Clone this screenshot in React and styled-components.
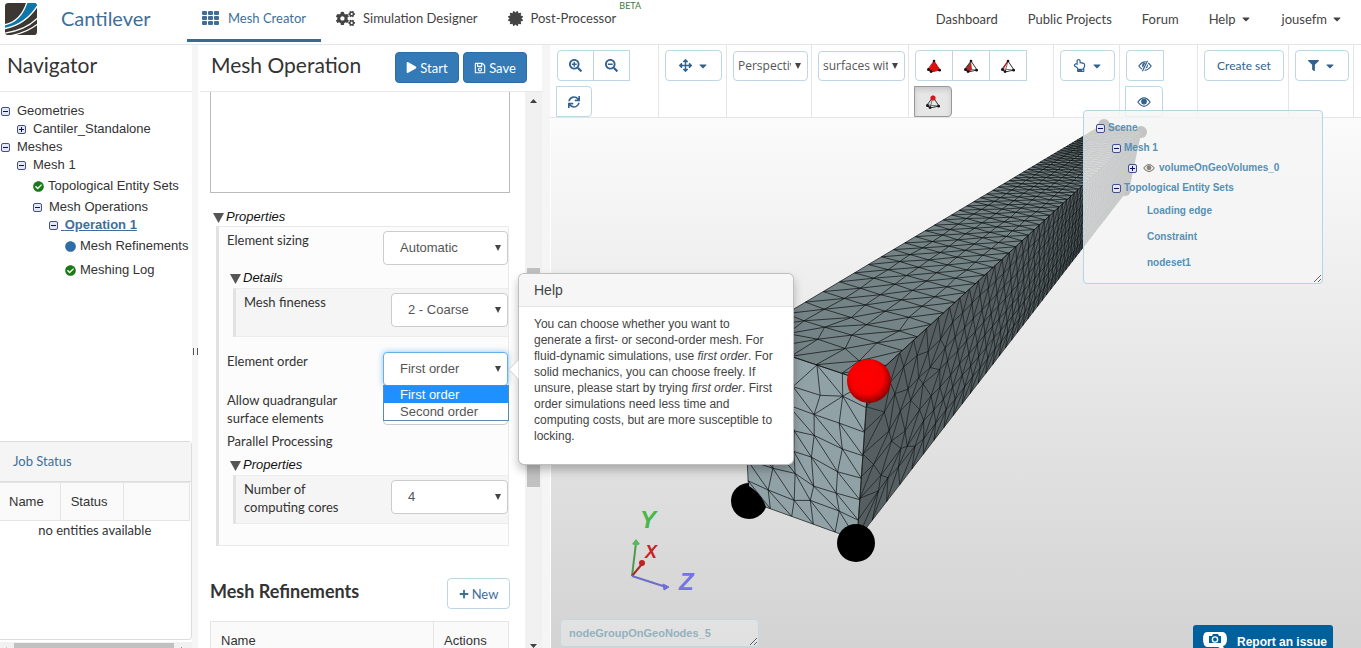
import {useMemo, useState} from 'react';
import styled, {createGlobalStyle, css} from 'styled-components';
import {
    FaArrowsAlt,
    FaCaretDown,
    FaCertificate,
    FaCheckCircle,
    FaCircle,
    FaCogs,
    FaFilter,
    FaPlay,
    FaPlus,
    FaRegHandPointUp,
    FaRegSave,
    FaSearchMinus,
    FaSearchPlus,
    FaSync,
} from 'react-icons/fa';

const SANS = '"Liberation Sans", Arial, sans-serif';
const LATO = 'Lato, "Liberation Sans", sans-serif';

const TREE = [
    {id: 'geo', label: 'Geometries', depth: 0, open: true},
    {id: 'cant', label: 'Cantiler_Standalone', depth: 1, open: false},
    {id: 'meshes', label: 'Meshes', depth: 0, open: true},
    {id: 'mesh1', label: 'Mesh 1', depth: 1, open: true},
    {id: 'topo', label: 'Topological Entity Sets', depth: 2, status: 'done'},
    {id: 'ops', label: 'Mesh Operations', depth: 2, open: true},
    {id: 'op1', label: 'Operation 1', depth: 3, open: true, active: true},
    {id: 'ref', label: 'Mesh Refinements', depth: 4, status: 'idle'},
    {id: 'log', label: 'Meshing Log', depth: 4, status: 'done'},
];

const SCENE = [
    {id: 'scene', label: 'Scene', depth: 0, open: true},
    {id: 'mesh', label: 'Mesh 1', depth: 1, open: true},
    {id: 'vol', label: 'volumeOnGeoVolumes_0', depth: 2, open: false, eye: true},
    {id: 'sets', label: 'Topological Entity Sets', depth: 1, open: true},
    {id: 'load', label: 'Loading edge', leaf: true},
    {id: 'cons', label: 'Constraint', leaf: true},
    {id: 'node', label: 'nodeset1', leaf: true},
];

// projective map of the unit square onto four screen points
const squareToQuad = ([p0, p1, p2, p3]) => {
    const dx1 = p1[0] - p2[0];
    const dx2 = p3[0] - p2[0];
    const dx3 = p0[0] - p1[0] + p2[0] - p3[0];
    const dy1 = p1[1] - p2[1];
    const dy2 = p3[1] - p2[1];
    const dy3 = p0[1] - p1[1] + p2[1] - p3[1];
    const det = dx1 * dy2 - dx2 * dy1;
    const g = (dx3 * dy2 - dx2 * dy3) / det;
    const h = (dx1 * dy3 - dx3 * dy1) / det;
    return (u, v) => {
        const w = g * u + h * v + 1;
        return [
            ((p1[0] - p0[0] + g * p1[0]) * u + (p3[0] - p0[0] + h * p3[0]) * v + p0[0]) / w,
            ((p1[1] - p0[1] + g * p1[1]) * u + (p3[1] - p0[1] + h * p3[1]) * v + p0[1]) / w,
        ];
    };
};

const noise = (i, j, k) => {
    const n = Math.sin(i * 12.9898 + j * 78.233 + k * 37.719) * 43758.5453;
    return n - Math.floor(n) - 0.5;
};

// triangulated grid on a face: u runs over cols, v over rows
// staggered faces shift every odd column by half a cell
const facePath = (quad, cols, rows, {jitter, flip = () => false, stagger = false}) => {
    const map = squareToQuad(quad);
    const node = (i, j) => {
        const a = jitter(i, j);
        const inside = j > 0 && j < rows;
        const du = i > 0 && i < cols && inside ? noise(i, j, 1) * a : 0;
        let dv = i > 0 && i < cols && inside ? noise(i, j, 2) * a : 0;
        if (stagger && i % 2 === 1 && i < cols && inside) dv += 0.5;
        return map((i + du) / cols, (j + dv) / rows).map((n) => n.toFixed(1)).join(' ');
    };
    let d = '';
    for (let i = 0; i <= cols; i++) {
        for (let j = 0; j <= rows; j++) {
            if (i < cols) d += `M${node(i, j)}L${node(i + 1, j)}`;
            if (j < rows) d += `M${node(i, j)}L${node(i, j + 1)}`;
            if (i < cols && j < rows) {
                const flipped = stagger ? i % 2 === 0 : flip(i, j);
                d += flipped
                    ? `M${node(i + 1, j)}L${node(i, j + 1)}`
                    : `M${node(i, j)}L${node(i + 1, j + 1)}`;
            }
        }
    }
    return d;
};

const NEAR = {tl: [191, 222], tr: [317, 264], bl: [198, 383], br: [306, 422]};
const FAR = {tl: [553, 6], tr: [590, 14], br: [578, 70]};
const FRONT = [NEAR.tl, NEAR.tr, NEAR.br, NEAR.bl];
const TOP = [NEAR.tl, NEAR.tr, FAR.tr, FAR.tl];
const SIDE = [NEAR.tr, NEAR.br, FAR.br, FAR.tr];
const points = (quad) => quad.map((p) => p.join(',')).join(' ');

const Beam = () => {
    const lines = useMemo(() => ({
        front: facePath(FRONT, 5, 7, {jitter: () => 0.35, flip: (i, j) => j < 2 && (i + j) % 2 === 0}),
        top: facePath(TOP, 5, 56, {jitter: (i, j) => (j < 4 ? 0.5 : 0.1)}),
        side: facePath(SIDE, 7, 56, {jitter: (i, j) => (j < 6 ? 0.6 : 0.1), stagger: true}),
    }), []);

    return (
        <Scene aria-label="Mesh">
            <defs>
                <radialGradient id="ball" cx="45%" cy="42%" r="58%">
                    <stop offset="0" stopColor="#ff0000"/>
                    <stop offset="0.65" stopColor="#f80000"/>
                    <stop offset="1" stopColor="#900000"/>
                </radialGradient>
            </defs>
            <circle cx="553" cy="7" r="6"/>
            <circle cx="590" cy="14" r="6"/>
            <circle cx="574" cy="72" r="6"/>
            <polygon points={points(TOP)} fill="#748385"/>
            <polygon points={points(SIDE)} fill="#555e61"/>
            <polygon points={points(FRONT)} fill="#91a2a6"/>
            <g fill="none" stroke="#0b0f10">
                <path d={lines.top} strokeWidth="0.7"/>
                <path d={lines.side} strokeWidth="0.6"/>
                <path d={lines.front} strokeWidth="0.7"/>
            </g>
            <path d="M198 365 A18 18 0 1 0 215 389 Q211 376 198 368 Z"/>
            <circle cx="305" cy="425" r="19"/>
            <circle cx="318" cy="263" r="22" fill="url(#ball)"/>

            <g fill="none" strokeWidth="2">
                <path d="M81 458 L85 425" stroke="#4c9a4c"/>
                <path d="M81 458 L91 446" stroke="#a82a2a"/>
                <path d="M81 458 L115 469" stroke="#6d6dc8"/>
            </g>
            <path d="M85 421 L89 426 L85 428 L81 426 Z" fill="#5bb75b"/>
            <circle cx="91" cy="445" r="3" fill="#c02020"/>
            <path d="M112 466 L118 469 L113 472 Z" fill="#6d6de0" stroke="#6d6dd8"/>
            <AxisLabel x="89" y="410" $size={24} fill="#45b845">Y</AxisLabel>
            <AxisLabel x="94" y="440" $size={18} fill="#c42424">X</AxisLabel>
            <AxisLabel x="128" y="472" $size={24} fill="#7474e6">Z</AxisLabel>
        </Scene>
    );
};

const Logo = () => (
    <svg width="32" height="32" viewBox="0 0 96 96" aria-label="Logo">
        <clipPath id="logo"><rect width="96" height="96" rx="10"/></clipPath>
        <g clipPath="url(#logo)">
            <rect width="96" height="96" fill="#3d3733"/>
            <path d="M-3 66 Q48 56 66 -3 H99 V6 Q62 66 -3 77 Z" fill="#0e76a8" stroke="#fff" strokeWidth="4"/>
            <path d="M-3 91 Q62 82 99 44 M14 99 Q68 88 99 62" fill="none" stroke="#fff" strokeWidth="4"/>
        </g>
    </svg>
);

const GridIcon = () => (
    <svg width="18" height="14" viewBox="0 0 18 14" fill="currentColor" aria-hidden="true">
        {[0, 5, 10].map((y) => [0, 6, 12].map((x) => (
            <rect key={`${x}-${y}`} x={x} y={y} width="5" height="4" rx="1"/>
        )))}
    </svg>
);

const EyeIcon = ({size = 14, slash}) => (
    <svg width={size} height={size} viewBox="0 0 16 16" fill="none" stroke="currentColor" strokeWidth="1.4" aria-hidden="true">
        <path d="M1 8 Q4.5 3.2 8 3.2 T15 8 Q11.5 12.8 8 12.8 T1 8 Z"/>
        <circle cx="8" cy="7.5" r="2.6" fill="currentColor"/>
        {slash && <path d="M11.5 1.5 L5 14.5" stroke="#fff" strokeWidth="3"/>}
        {slash && <path d="M10.8 2 L5 14"/>}
    </svg>
);

const TetraIcon = ({mode}) => (
    <svg width="14" height="14" viewBox="0 0 14 14" strokeLinejoin="round" aria-hidden="true">
        {mode === 'volume' && <path d="M7 2 L1 11 L4 13 L13 11 Z" fill="#e01010"/>}
        {mode === 'face' && <path d="M7 2 L4 13 L8 11 Z M7 2 L1 10 L4 13 Z" fill="#e01010"/>}
        <path d="M7 2 L1 10 L4 13 L13 11 Z" fill="none" stroke={mode === 'volume' ? '#c01010' : '#333'}/>
        {mode !== 'volume' && <path d="M7 2 L4 13 M1 10 L13 11" fill="none" stroke="#555" strokeWidth="0.8"/>}
        {mode === 'edge' && <path d="M7 2 L2 10" stroke="#e01010" strokeWidth="1.2"/>}
        <g fill="#111">
            <circle cx="7" cy="2" r="1.3"/>
            <circle cx="1.5" cy="10.5" r="1.5"/>
            <circle cx="4" cy="12.6" r="1.4"/>
            <circle cx="12.6" cy="11.2" r="1.4"/>
        </g>
        {mode === 'node' && <circle cx="7" cy="3" r="2.6" fill="#d81818"/>}
    </svg>
);

const Toggle = ({open, onClick}) => (
    <ToggleButton type="button" onClick={onClick} aria-label={open ? 'Collapse' : 'Expand'}>
        <svg width="9" height="9" viewBox="0 0 9 9" aria-hidden="true">
            <rect x="0.5" y="0.5" width="8" height="8" rx="1.5" fill="#e4e6f8" stroke="#44508c"/>
            <path d={open ? 'M2 4.5 H7' : 'M2 4.5 H7 M4.5 2 V7'} stroke="#101060"/>
        </svg>
    </ToggleButton>
);

const Navigator = () => (
    <NavPanel>
        <PanelTitle>Navigator</PanelTitle>
        <Tree>
            {TREE.map((item) => (
                <TreeRow key={item.id} $depth={item.depth} $tall={Boolean(item.status)}>
                    {item.status ? (
                        <Status $kind={item.status}>
                            {item.status === 'done' ? <FaCheckCircle/> : <FaCircle/>}
                        </Status>
                    ) : <Toggle open={item.open}/>}
                    {item.active
                        ? <ActiveLink href="#operation">&nbsp;{item.label}</ActiveLink>
                        : <span>{item.label}</span>}
                </TreeRow>
            ))}
        </Tree>
        <JobPanel>
            <JobTitle>Job Status</JobTitle>
            <JobTable>
                <thead>
                    <tr><th>Name</th><th>Status</th><th aria-label="Actions"/></tr>
                </thead>
                <tbody>
                    <tr><td colSpan="3">no entities available</td></tr>
                </tbody>
            </JobTable>
        </JobPanel>
        <HScroll aria-hidden="true">
            <Arrow $dir="left" $muted/>
            <HThumb/>
            <Arrow $dir="right"/>
        </HScroll>
    </NavPanel>
);

const Field = ({id, label, value, options, narrow, tight, focused, children}) => (
    <FieldRow $tight={tight}>
        <FieldLabel htmlFor={id} $narrow={narrow}>{label}</FieldLabel>
        <FieldControl $narrow={narrow}>
            <Select id={id} defaultValue={value} $focused={focused}>
                {options.map((o) => <option key={o}>{o}</option>)}
            </Select>
            {children}
        </FieldControl>
    </FieldRow>
);

const MeshOperation = () => {
    const [order, setOrder] = useState('First order');

    return (
        <OperationPanel>
            <PanelHead>
                <h1>Mesh Operation</h1>
                <PrimaryButton type="button"><FaPlay size={11}/>Start</PrimaryButton>
                <PrimaryButton type="button"><FaRegSave size={12}/>Save</PrimaryButton>
            </PanelHead>
            <OperationBody>
                <Form onSubmit={(e) => e.preventDefault()}>
                    <LogBox aria-label="Log" readOnly/>
                    <Legend>Properties</Legend>
                    <Group>
                        <Field id="sizing" label="Element sizing" value="Automatic" tight
                               options={['Automatic', 'Manual']}/>
                        <Legend $nested>Details</Legend>
                        <SubGroup>
                            <Field id="fineness" label="Mesh fineness" value="2 - Coarse" narrow
                                   options={['1 - Very coarse', '2 - Coarse', '3 - Moderate']}/>
                        </SubGroup>
                        <Spacer/>
                        <Field id="order" label="Element order" value={order} focused
                               options={['First order', 'Second order']}>
                            <OptionList role="listbox">
                                {['First order', 'Second order'].map((o) => (
                                    <Option key={o} role="option" aria-selected={o === order}
                                            $selected={o === order} onClick={() => setOrder(o)}>{o}</Option>
                                ))}
                            </OptionList>
                            <Popover role="tooltip">
                                <h3>Help</h3>
                                <p>
                                    You can choose whether you want to generate a first- or second-order mesh. For
                                    fluid-dynamic simulations, use <em>first order</em>. For solid mechanics, you can
                                    choose freely. If unsure, please start by trying <em>first order</em>. First order
                                    simulations need less time and computing costs, but are more susceptible to locking.
                                </p>
                            </Popover>
                        </Field>
                        <Field id="quad" label="Allow quadrangular surface elements" value="" options={['']}/>
                        <FieldText>Parallel Processing</FieldText>
                        <Legend $nested>Properties</Legend>
                        <SubGroup>
                            <Field id="cores" label="Number of computing cores" value="4" narrow options={['4', '8', '16']}/>
                        </SubGroup>
                    </Group>
                    <SectionHead>
                        <h2>Mesh Refinements</h2>
                        <OutlineButton type="button"><FaPlus size={10}/>New</OutlineButton>
                    </SectionHead>
                    <RefinementTable>
                        <thead><tr><th>Name</th><th>Actions</th></tr></thead>
                    </RefinementTable>
                </Form>
                <VScroll aria-hidden="true">
                    <Arrow $dir="up"/>
                    <VThumb/>
                    <Arrow $dir="down"/>
                </VScroll>
            </OperationBody>
        </OperationPanel>
    );
};

const Viewer = () => (
    <ViewerPanel>
        <Toolbar>
            <Tools $width={108}>
                <ToolButton type="button" aria-label="Zoom in" $edge="left"><FaSearchPlus size={13}/></ToolButton>
                <ToolButton type="button" aria-label="Zoom out"><FaSearchMinus size={13}/></ToolButton>
                <ToolButton type="button" aria-label="Refresh" $edge="right"><FaSync size={12}/></ToolButton>
            </Tools>
            <Tools $width={68}>
                <ToolButton type="button" aria-label="Move" $wide><FaArrowsAlt size={13}/><FaCaretDown size={12}/></ToolButton>
            </Tools>
            <Tools $width={85}>
                <ToolSelect aria-label="Projection" $width={75}><option>Perspective</option></ToolSelect>
            </Tools>
            <Tools $width={97}>
                <ToolSelect aria-label="Render mode" $width={87}><option>surfaces with edges</option></ToolSelect>
            </Tools>
            <Tools $width={145}>
                <ToolButton type="button" aria-label="Pick volume" $edge="left"><TetraIcon mode="volume"/></ToolButton>
                <ToolButton type="button" aria-label="Pick face"><TetraIcon mode="face"/></ToolButton>
                <ToolButton type="button" aria-label="Pick edge"><TetraIcon mode="edge"/></ToolButton>
                <ToolButton type="button" aria-label="Pick node" $edge="right" $pressed><TetraIcon mode="node"/></ToolButton>
            </Tools>
            <Tools $width={66}>
                <ToolButton type="button" aria-label="Select" $wide><FaRegHandPointUp size={13}/><FaCaretDown size={12}/></ToolButton>
            </Tools>
            <Tools $width={78}>
                <ToolButton type="button" aria-label="Hide" $edge="left"><EyeIcon slash/></ToolButton>
                <ToolButton type="button" aria-label="Show" $edge="right"><EyeIcon/></ToolButton>
            </Tools>
            <Tools $width={91}>
                <ToolButton type="button" $wide>Create set</ToolButton>
            </Tools>
            <Tools $width={65}>
                <ToolButton type="button" aria-label="Filter" $wide><FaFilter size={11}/><FaCaretDown size={12}/></ToolButton>
            </Tools>
        </Toolbar>
        <Canvas>
            <Beam/>
            <ScenePanel>
                {SCENE.map((item) => (
                    <SceneRow key={item.id} $depth={item.depth} $leaf={item.leaf}>
                        {!item.leaf && <Toggle open={item.open}/>}
                        {item.eye && <SceneEye><EyeIcon size={12}/></SceneEye>}
                        <span>{item.label}</span>
                    </SceneRow>
                ))}
            </ScenePanel>
            <Selection aria-label="Selection" defaultValue="nodeGroupOnGeoNodes_5"/>
            <Report type="button">
                <svg width="24" height="20" viewBox="0 0 24 20" aria-hidden="true">
                    <path d="M4 0 H20 Q24 1 24 7 T20 14 L22 19 L15 15 H4 Q0 14 0 7 T4 0 Z" fill="#fff"/>
                    <path d="M6 4 H9 L10 2 H15 L16 4 H18 V11 H6 Z" fill="#00609c"/>
                    <circle cx="12" cy="7.5" r="2.6" fill="#00609c" stroke="#fff" strokeWidth="1.4"/>
                </svg>
                Report an issue
            </Report>
        </Canvas>
    </ViewerPanel>
);

export default function App() {
    return (
        <>
            <GlobalStyle/>
            <Page>
                <Header>
                    <Logo/>
                    <Project href="#project">Cantilever</Project>
                    <Tabs>
                        <Tab href="#mesh" $active><GridIcon/>Mesh Creator</Tab>
                        <Tab href="#simulation"><FaCogs size={19}/>Simulation Designer</Tab>
                        <Tab href="#post"><FaCertificate size={15}/>Post-Processor<sup>BETA</sup></Tab>
                    </Tabs>
                    <Menu>
                        <a href="#dashboard">Dashboard</a>
                        <a href="#public">Public Projects</a>
                        <a href="#forum">Forum</a>
                        <a href="#help">Help<FaCaretDown size={12}/></a>
                        <a href="#user">jousefm<FaCaretDown size={12}/></a>
                    </Menu>
                </Header>
                <Columns>
                    <Navigator/>
                    <Splitter/>
                    <MeshOperation/>
                    <Viewer/>
                </Columns>
            </Page>
        </>
    );
}

const GlobalStyle = createGlobalStyle`
  * {
    box-sizing: border-box;
  }

  body {
    margin: 0;
    background: #fff;
    color: #333;
    font: 13px/18px ${LATO};
  }

  button, select, textarea {
    font: inherit;
    color: inherit;
  }

  h1, h2, h3, p, ul {
    margin: 0;
    padding: 0;
  }

  a {
    text-decoration: none;
  }
`;

const Page = styled.div`
  display: grid;
  grid-template-rows: 45px minmax(0, 1fr);
  height: 100vh;
  overflow: hidden;
`;

const Header = styled.header`
  display: flex;
  align-items: flex-start;
  padding: 3px 3px 0 5px;
  border-bottom: 1px solid #e5e5e5;
`;

const Project = styled.a`
  width: 126px;
  margin-left: 24px;
  color: #3f6f99;
  font-size: 20px;
  line-height: 31px;
`;

const Tabs = styled.nav`
  display: flex;
  margin-top: -3px;
`;

const Tab = styled.a`
  display: flex;
  align-items: center;
  gap: 8px;
  height: 42px;
  padding: 0 15px 3px;
  border-bottom: 3px solid ${({$active}) => ($active ? '#386b94' : 'transparent')};
  color: ${({$active}) => ($active ? '#3f6f99' : '#444')};

  sup {
    align-self: flex-start;
    margin-left: -5px;
    color: #3c763d;
    font-size: 9px;
    line-height: 11px;
  }
`;

const Menu = styled.nav`
  display: flex;
  margin-left: auto;

  a {
    display: flex;
    align-items: center;
    gap: 4px;
    padding: 0 15px;
    color: #444;
    line-height: 32px;
  }
`;

const Columns = styled.div`
  display: grid;
  grid-template-columns: 192px 6px 344px minmax(0, 1fr);
  min-height: 0;
`;

const NavPanel = styled.aside`
  display: flex;
  flex-direction: column;
  min-width: 0;
  overflow: hidden;
`;

const PanelTitle = styled.h1`
  padding: 0 7px 6px;
  border-bottom: 1px solid #e8e8e8;
  font-size: 21px;
  font-weight: 400;
  line-height: 40px;
`;

const Tree = styled.ul`
  flex: 1;
  padding-top: 10px;
  list-style: none;
  font-family: ${SANS};
  font-size: 13px;
`;

const TreeRow = styled.li`
  display: flex;
  align-items: center;
  gap: ${({$tall}) => ($tall ? 4 : 7)}px;
  height: ${({$tall}) => ($tall ? 24 : 18)}px;
  padding-left: ${({$depth}) => $depth * 16 + 1}px;
  white-space: nowrap;
`;

const ToggleButton = styled.button`
  display: flex;
  padding: 0;
  border: none;
  background: transparent;
`;

const Status = styled.span`
  display: flex;
  color: ${({$kind}) => ($kind === 'done' ? '#1a7a1a' : '#2f6da8')};
  font-size: 11px;
`;

const ActiveLink = styled.a`
  margin-left: -4px;
  color: #3f6f99;
  font-weight: 700;
  text-decoration: underline;
`;

const JobPanel = styled.section`
  height: 199px;
  border: 1px solid #ddd;
  border-left: none;
  border-radius: 0 4px 4px 0;
`;

const JobTitle = styled.h2`
  padding: 0 13px;
  border-bottom: 1px solid #ddd;
  background: #f5f5f5;
  color: #3f6f99;
  font-size: 13px;
  font-weight: 400;
  line-height: 39px;
`;

const tableHead = css`
  border: 1px solid #e5e5e5;
  background: #fafafa;
  font-family: ${SANS};
  font-weight: 400;
  text-align: left;
`;

const JobTable = styled.table`
  width: calc(100% - 1px);
  border-collapse: collapse;

  th {
    ${tableHead};
    height: 38px;
    padding: 0 9px;
    width: 66px;
  }

  th:first-child {
    width: 60px;
    border-left: none;
  }

  th:nth-child(2) {
    width: 63px;
    padding-left: 10px;
  }

  td {
    padding: 0;
    text-align: center;
  }
`;

const HScroll = styled.div`
  display: flex;
  align-items: center;
  gap: 7px;
  height: 17px;
  margin: 2px 0 -11px;
  padding: 0 3px;
  background: #f1f1f1;
`;

const HThumb = styled.div`
  width: 160px;
  height: 15px;
  background: #c1c1c1;
`;

const arrows = {
    up: '50% 0, 100% 100%, 0 100%',
    down: '0 0, 100% 0, 50% 100%',
    left: '0 50%, 100% 0, 100% 100%',
    right: '0 0, 100% 50%, 0 100%',
};

const Arrow = styled.i`
  flex: none;
  width: ${({$dir}) => ($dir === 'up' || $dir === 'down' ? 7 : 4)}px;
  height: ${({$dir}) => ($dir === 'up' || $dir === 'down' ? 4 : 7)}px;
  background: ${({$muted}) => ($muted ? '#a3a3a3' : '#404040')};
  clip-path: polygon(${({$dir}) => arrows[$dir]});
`;

const Splitter = styled.div`
  display: flex;
  align-items: center;
  justify-content: center;
  padding-top: 10px;
  background: #f5f5f5;

  &::before {
    content: '';
    width: 3px;
    height: 7px;
    border: solid #555;
    border-width: 0 1px;
  }
`;

const OperationPanel = styled.main`
  position: relative;
  z-index: 2;
  display: grid;
  grid-template-rows: 47px minmax(0, 1fr);
  min-height: 0;
`;

const PanelHead = styled.header`
  display: flex;
  gap: 4px;
  margin-left: 2px;
  padding: 7px 15px 0 11px;
  border-bottom: 1px solid #e8e8e8;

  h1 {
    flex: 1;
    font-size: 21px;
    font-weight: 400;
    line-height: 26px;
  }
`;

const buttonBase = css`
  display: flex;
  align-items: center;
  justify-content: center;
  gap: 3px;
  height: 31px;
  border: 1px solid;
  border-radius: 4px;
`;

const PrimaryButton = styled.button`
  ${buttonBase};
  width: 64px;
  padding: 0;
  border-color: #2e6da4;
  background: #337ab7;
  color: #fff;
`;

const OutlineButton = styled.button`
  ${buttonBase};
  width: 63px;
  padding: 0;
  border-color: #bcd8e4;
  background: #fff;
  color: #3f6f99;
`;

const OperationBody = styled.div`
  display: flex;
  min-height: 0;
`;

const Form = styled.form`
  flex: 1;
  padding: 0 15px 0 12px;
`;

const LogBox = styled.textarea`
  display: block;
  width: 100%;
  height: 101px;
  border: 1px solid #bbb;
  border-top: none;
  outline: none;
  resize: none;
`;

const Legend = styled.div`
  display: flex;
  align-items: center;
  gap: 2px;
  height: 18px;
  margin: ${({$nested}) => ($nested ? '4px 0 1px 11px' : '15px 0 0 3px')};
  color: #111;
  font-family: ${SANS};
  font-style: italic;

  &::before {
    content: '';
    width: 11px;
    height: 10px;
    margin-top: 2px;
    background: #555;
    clip-path: polygon(0 0, 100% 0, 50% 100%);
  }
`;

const Group = styled.div`
  min-height: 320px;
  margin: 0 1px 0 6px;
  padding-top: 4px;
  border: 1px solid #eaeaea;
  border-left: 3px solid #e2e2e2;
  background: #fcfcfc;
`;

const SubGroup = styled.div`
  height: 49px;
  margin-left: 14px;
  padding-top: 4px;
  border: 1px solid #ececec;
  border-right: none;
  border-left: 3px solid #e2e2e2;
  background: #f5f5f5;
`;

const Spacer = styled.div`
  height: 15px;
`;

const FieldRow = styled.div`
  display: flex;
  justify-content: space-between;
  min-height: ${({$tight}) => ($tight ? 34 : 39)}px;
`;

const FieldLabel = styled.label`
  width: ${({$narrow}) => ($narrow ? 124 : 136)}px;
  padding-left: 8px;
`;

const FieldText = styled.div`
  padding: 2px 8px;
`;

const FieldControl = styled.div`
  position: relative;
  width: ${({$narrow}) => ($narrow ? 117 : 125)}px;
`;

const chevron = css`
  appearance: none;
  background: #fff url("data:image/svg+xml,%3Csvg xmlns='http://www.w3.org/2000/svg' width='6' height='6'%3E%3Cpath d='M0 0h6L3 6z' fill='%23444'/%3E%3C/svg%3E") no-repeat right 6px center;
`;

const Select = styled.select`
  ${chevron};
  width: 100%;
  height: 34px;
  padding: 0 20px 0 16px;
  border: 1px solid ${({$focused}) => ($focused ? '#66afe9' : '#ccc')};
  border-radius: 4px;
  outline: none;
  color: #555;
  font-family: ${SANS};
  box-shadow: ${({$focused}) => ($focused ? '0 0 6px rgba(102, 175, 233, 0.7)' : 'none')};
`;

const OptionList = styled.ul`
  position: absolute;
  top: 33px;
  left: 0;
  z-index: 1;
  width: 126px;
  border: 1px solid #5c8ab0;
  background: #fff;
  color: #555;
  font-family: ${SANS};
  list-style: none;
`;

const Option = styled.li`
  padding-left: 16px;
  background: ${({$selected}) => ($selected ? '#1e90ff' : '#fff')};
  color: ${({$selected}) => ($selected ? '#fff' : '#555')};
  line-height: 17px;
`;

const Popover = styled.div`
  position: absolute;
  top: -79px;
  left: 135px;
  z-index: 3;
  width: 276px;
  border: 1px solid rgba(0, 0, 0, 0.25);
  border-radius: 6px;
  background: #fff;
  color: #444;
  font-family: ${SANS};
  box-shadow: 0 5px 10px rgba(0, 0, 0, 0.25);

  h3 {
    padding: 0 15px;
    border-bottom: 1px solid #e5e5e5;
    border-radius: 6px 6px 0 0;
    background: #f6f6f6;
    font-size: 14px;
    font-weight: 400;
    line-height: 32px;
  }

  p {
    padding: 9px 15px 20px;
    font-size: 12px;
    line-height: 16px;
  }

  &::before {
    content: '';
    position: absolute;
    top: 88px;
    left: -8px;
    width: 14px;
    height: 14px;
    border: solid rgba(0, 0, 0, 0.2);
    border-width: 0 0 1px 1px;
    background: #fff;
    transform: rotate(45deg);
    clip-path: polygon(0 0, 100% 100%, 0 100%);
  }
`;

const SectionHead = styled.div`
  display: flex;
  justify-content: space-between;
  margin-top: 32px;

  h2 {
    font-size: 18px;
    font-weight: 700;
    line-height: 27px;
  }
`;

const RefinementTable = styled.table`
  width: calc(100% - 1px);
  margin-top: 12px;
  border-collapse: collapse;

  th {
    ${tableHead};
    height: 38px;
    padding: 0 10px;
  }

  th:last-child {
    width: 75px;
  }
`;

const VScroll = styled.div`
  display: flex;
  flex-direction: column;
  align-items: center;
  justify-content: space-between;
  width: 17px;
  padding-top: 7px;
  background: #f1f1f1;
`;

const VThumb = styled.div`
  width: 13px;
  height: 40%;
  margin-top: 8px;
  background: #c1c1c1;
`;

const ViewerPanel = styled.section`
  display: grid;
  grid-template-rows: 73px minmax(0, 1fr);
  min-width: 0;
  border-left: 8px solid #f5f5f5;
`;

const Toolbar = styled.div`
  display: flex;
  padding-left: 1px;
  border-bottom: 1px solid #e5e5e5;
`;

const Tools = styled.div`
  display: flex;
  flex: none;
  flex-wrap: wrap;
  align-content: flex-start;
  row-gap: 5px;
  width: ${({$width}) => $width + 'px'};
  padding: 5px 4px 0 6px;
  border-right: 1px solid #e5e5e5;
`;

const radii = {
    left: '4px 0 0 4px',
    right: '0 4px 4px 0',
};

const ToolButton = styled.button`
  ${buttonBase};
  gap: 5px;
  width: ${({$wide}) => ($wide ? '100%' : 'auto')};
  margin-left: ${({$wide, $edge}) => ($wide || $edge === 'left' ? 0 : '-1px')};
  padding: 0 ${({$wide}) => ($wide ? 0 : 11)}px;
  border-color: ${({$pressed}) => ($pressed ? '#999' : '#bcd8e4')};
  border-radius: ${({$edge, $wide}) => ($wide ? '4px' : radii[$edge] || '0')};
  background: ${({$pressed}) => ($pressed ? '#e6e6e6' : '#fff')};
  box-shadow: ${({$pressed}) => ($pressed ? 'inset 0 3px 5px rgba(0, 0, 0, 0.125)' : 'none')};
  color: #33628f;
  font-size: 12px;
`;

const ToolSelect = styled.select`
  ${chevron};
  width: ${({$width}) => $width + 'px'};
  height: 30px;
  margin-top: 1px;
  padding: 0 16px 0 4px;
  border: 1px solid #bcd8e4;
  border-radius: 4px;
  color: #555;
  font-family: "Open Sans", sans-serif;
  font-size: 12px;
`;

const Canvas = styled.div`
  position: relative;
  margin-left: 1px;
  background: linear-gradient(#fbfbfb, #e6e6e6 50%, #d3d3d3);
`;

const Scene = styled.svg`
  display: block;
  width: 100%;
  height: 100%;
`;

const AxisLabel = styled.text`
  font: italic 700 ${({$size}) => $size}px ${SANS};
`;

const ScenePanel = styled.div`
  position: absolute;
  top: -8px;
  right: 38px;
  width: 240px;
  height: 174px;
  padding: 7px 12px;
  border: 1px solid #b5d5e2;
  border-radius: 4px;
  background: rgba(245, 245, 245, 0.8);
  color: #5591b3;
  font-family: ${SANS};
  font-size: 10px;
  font-weight: 700;
  overflow: hidden;
  resize: both;
`;

const SceneRow = styled.div`
  display: flex;
  align-items: center;
  gap: 3px;
  height: ${({$leaf}) => ($leaf ? 26 : 20)}px;
  padding-left: ${({$leaf, $depth}) => ($leaf ? 51 : $depth * 16)}px;
  white-space: nowrap;
`;

const SceneEye = styled.i`
  display: flex;
  padding: 0 1px 0 3px;
  color: #85857a;
`;

const Selection = styled.textarea`
  position: absolute;
  bottom: 1px;
  left: 9px;
  width: 199px;
  height: 28px;
  padding: 4px 8px;
  border: 1px solid #c5d8e0;
  border-radius: 4px;
  background: rgba(245, 245, 245, 0.4);
  color: #93b1c0;
  font-family: ${SANS};
  font-size: 11px;
  font-weight: 700;
  overflow: hidden;
  resize: both;
`;

const Report = styled.button`
  position: absolute;
  right: 28px;
  bottom: 0;
  display: flex;
  align-items: center;
  gap: 10px;
  width: 140px;
  height: 23px;
  padding: 10px 0 0 10px;
  border: none;
  border-radius: 3px 3px 0 0;
  background: #00609c;
  color: #fff;
  font-family: ${SANS};
  font-size: 12px;
  font-weight: 700;
  white-space: nowrap;
  overflow: hidden;
`;
